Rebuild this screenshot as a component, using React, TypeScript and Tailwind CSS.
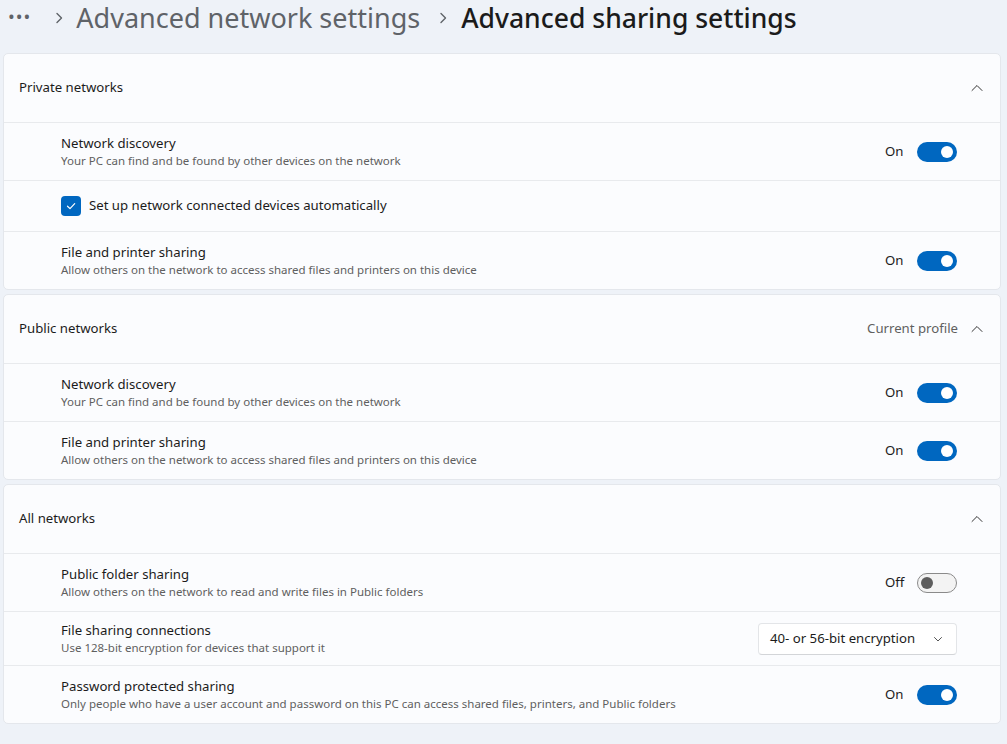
const font = { fontFamily: '"Noto Sans", "Open Sans", sans-serif' };

type RowProps = {
  title: string;
  desc: string;
  on?: boolean;
};

const Toggle = ({ on }: { on: boolean }) => (
  <div className="flex items-center">
    <span className="text-[13.2px] text-[#1b1b1b] w-[32px]">{on ? "On" : "Off"}</span>
    {on ? (
      <div className="w-[40px] h-[20px] rounded-full bg-[#0067c0] flex items-center justify-end pr-[4px]">
        <div className="w-[12px] h-[12px] rounded-full bg-white" />
      </div>
    ) : (
      <div className="w-[40px] h-[20px] rounded-full border border-[#8a8a8a] bg-[#f3f3f3] flex items-center pl-[3px]">
        <div className="w-[12px] h-[12px] rounded-full bg-[#5d5d5d]" />
      </div>
    )}
  </div>
);

const ChevronUp = () => (
  <svg width="14" height="14" viewBox="0 0 14 14" fill="none">
    <path d="M2 9.5L7 4.5L12 9.5" stroke="#333" strokeWidth="1" strokeLinecap="round" strokeLinejoin="round" />
  </svg>
);

const ChevronDown = () => (
  <svg width="10" height="10" viewBox="0 0 10 10" fill="none">
    <path d="M1.5 3.5L5 7L8.5 3.5" stroke="#555" strokeWidth="1" strokeLinecap="round" strokeLinejoin="round" />
  </svg>
);

const Crumb = () => (
  <svg width="10" height="14" viewBox="0 0 10 14" fill="none">
    <path d="M3 2.5L7.5 7L3 11.5" stroke="#5f6368" strokeWidth="1.4" strokeLinecap="round" strokeLinejoin="round" />
  </svg>
);

const Row = ({ title, desc, on = true }: RowProps) => (
  <div className="h-[58px] border-t border-[#e8eaed] flex items-center pl-[57px] pr-[43px]">
    <div className="flex-1 leading-tight">
      <div className="text-[13.2px] text-[#1b1b1b]">{title}</div>
      <div className="text-[11.5px] text-[#5f5f5f] mt-[2px]">{desc}</div>
    </div>
    <Toggle on={on} />
  </div>
);

const Header = ({ title, extra }: { title: string; extra?: string }) => (
  <div className="h-[68px] flex items-center pl-[15px] pr-[16px]">
    <div className="flex-1 text-[13.2px] text-[#1b1b1b]">{title}</div>
    {extra && <span className="text-[13.2px] text-[#5f5f5f] mr-[12px]">{extra}</span>}
    <ChevronUp />
  </div>
);

const Card = ({ children }: { children: React.ReactNode }) => (
  <div className="ml-[3px] mr-[6px] bg-[#fbfcfe] border border-[#e4e7ec] rounded-[5px] overflow-hidden">
    {children}
  </div>
);

export default function App() {
  return (
    <div className="w-[1007px] h-[744px] bg-[#eef2f8] overflow-hidden" style={font}>
      <div className="h-[53px] flex items-start pl-[8px] pt-[1px]">
        <span className="text-[#5f6368] text-[18px] tracking-[1px] leading-none mt-[6px]">•••</span>
        <span className="ml-[23px] mr-[12px] mt-[10px]"><Crumb /></span>
        <span className="text-[#5f6368] text-[27px] leading-[34px]">Advanced network settings</span>
        <span className="ml-[18px] mr-[13px] mt-[10px]"><Crumb /></span>
        <span className="text-[#1b1b1b] text-[26.5px] leading-[34px] font-medium">Advanced sharing settings</span>
      </div>
      <div className="flex flex-col gap-[4px]">
        <Card>
          <Header title="Private networks" />
          <Row title="Network discovery" desc="Your PC can find and be found by other devices on the network" />
          <div className="h-[51px] border-t border-[#e8eaed] flex items-center pl-[57px]">
            <div className="w-[20px] h-[20px] rounded-[4px] bg-[#0067c0] flex items-center justify-center">
              <svg width="12" height="12" viewBox="0 0 12 12" fill="none">
                <path d="M2.5 6.2L5 8.6L9.7 3.6" stroke="white" strokeWidth="1.2" strokeLinecap="round" strokeLinejoin="round" />
              </svg>
            </div>
            <span className="ml-[8px] text-[13.2px] text-[#1b1b1b]">Set up network connected devices automatically</span>
          </div>
          <Row title="File and printer sharing" desc="Allow others on the network to access shared files and printers on this device" />
        </Card>
        <Card>
          <Header title="Public networks" extra="Current profile" />
          <Row title="Network discovery" desc="Your PC can find and be found by other devices on the network" />
          <Row title="File and printer sharing" desc="Allow others on the network to access shared files and printers on this device" />
        </Card>
        <Card>
          <Header title="All networks" />
          <Row title="Public folder sharing" desc="Allow others on the network to read and write files in Public folders" on={false} />
          <div className="h-[54px] border-t border-[#e8eaed] flex items-center pl-[57px] pr-[43px]">
            <div className="flex-1 leading-tight">
              <div className="text-[13.2px] text-[#1b1b1b]">File sharing connections</div>
              <div className="text-[11.5px] text-[#5f5f5f] mt-[2px]">Use 128-bit encryption for devices that support it</div>
            </div>
            <div className="w-[199px] h-[32px] bg-white border border-[#e3e5e8] border-b-[#d3d5d8] rounded-[4px] flex items-center pl-[11px] pr-[13px]">
              <span className="flex-1 text-[13.2px] text-[#1b1b1b]">40- or 56-bit encryption</span>
              <ChevronDown />
            </div>
          </div>
          <Row title="Password protected sharing" desc="Only people who have a user account and password on this PC can access shared files, printers, and Public folders" />
        </Card>
      </div>
    </div>
  );
}
